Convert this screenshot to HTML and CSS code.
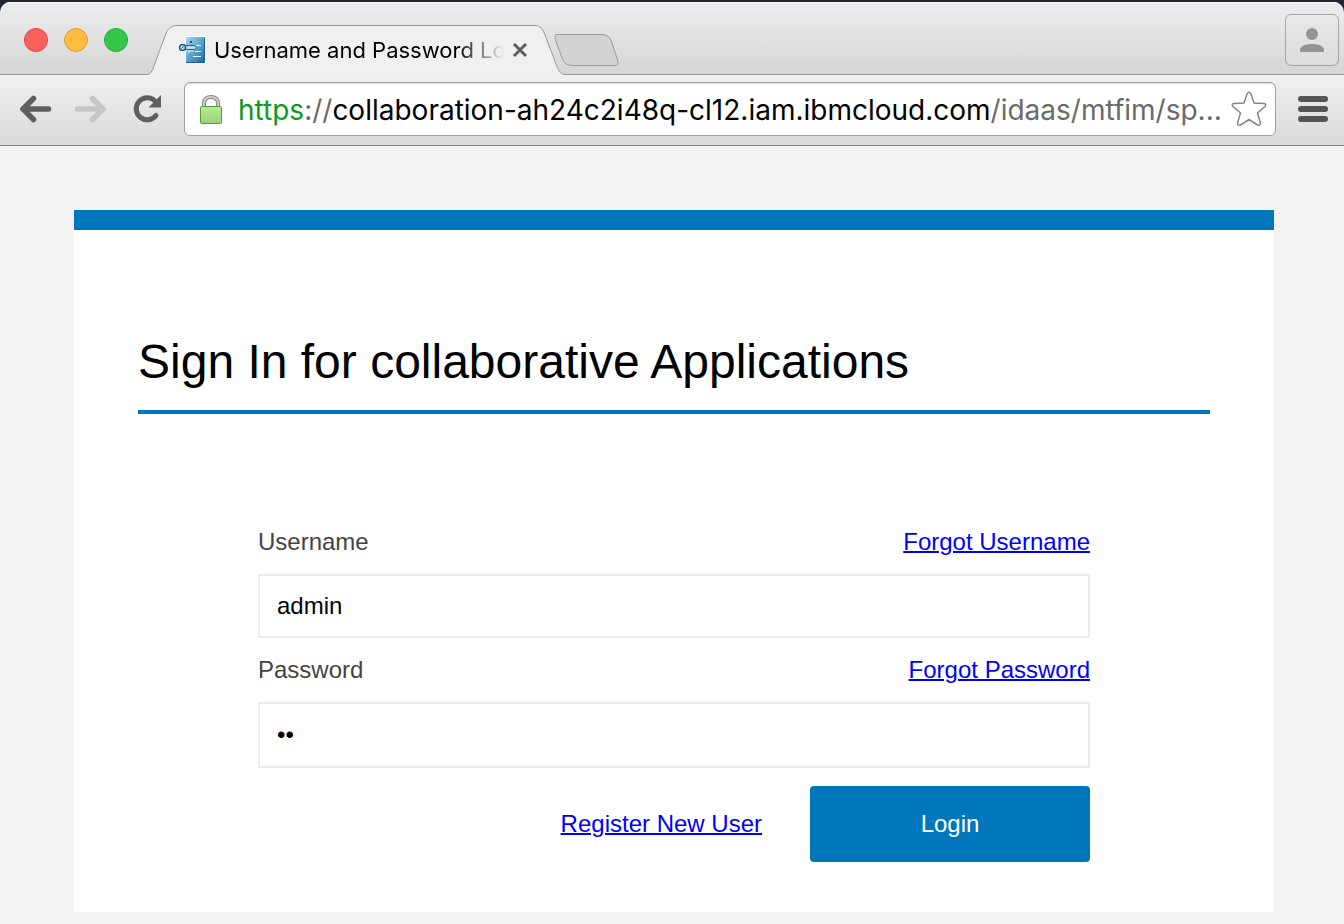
FILE: index.html
```html
<!DOCTYPE html>
<html lang="en">
<head>
<meta charset="utf-8">
<title>Username and Password Login</title>
<link rel="stylesheet" href="styles.css">
</head>
<body>
<div class="browser">
  <header class="chrome">
    <div class="tab-strip">
      <div class="window-controls">
        <button class="light light-close" aria-label="Close window"></button>
        <button class="light light-minimize" aria-label="Minimize window"></button>
        <button class="light light-zoom" aria-label="Zoom window"></button>
      </div>
      <div class="tab">
        <svg class="tab-edge" width="32" height="50" viewBox="0 0 32 50" aria-hidden="true">
          <path d="M0 50V49.5C5 49.5 6 46 8 41L19 11C21 5 24 .5 32 .5V50Z" fill="#f0f0f0"/>
          <path d="M0 49.5C5 49.5 6 46 8 41L19 11C21 5 24 .5 32 .5" fill="none" stroke="#989898"/>
        </svg>
        <div class="tab-body">
          <svg class="favicon" width="28" height="30" viewBox="0 0 28 30" aria-hidden="true">
            <defs>
              <linearGradient id="doc" x1="0" y1="0" x2="1" y2="1">
                <stop offset="0" stop-color="#a9d5e9"/><stop offset=".5" stop-color="#5ba3cb"/><stop offset="1" stop-color="#17659a"/>
              </linearGradient>
            </defs>
            <path d="M7 1H28V29H7V17H3L0 14V10L3 8H7Z" fill="#fff"/>
            <path d="M8 2H27V28H8Z" fill="url(#doc)"/>
            <path d="M8.500 27.500H26.500V3" fill="none" stroke="#1b618f"/>
            <path d="M12 7H14" stroke="#17547d" stroke-width="2"/>
            <path d="M18 10.500H23M17 16.500H23M15 21.500H23" stroke="#e7f5fb"/>
            <path d="M6 10.500H16L18.500 12.500L17 14.500H6Z" fill="#b9dcea" stroke="#1c6792"/>
            <path d="M9 15V17M11 15V18M13 15V17M15 15V17" stroke="#e9f7fb"/>
            <circle cx="4.500" cy="12.500" r="3" fill="#b7d9e8" stroke="#19628d" stroke-width="1.500"/>
            <path d="M3.500 13.500L5.500 11.500" stroke="#19628d"/>
          </svg>
          <span class="tab-title">Username and Password Lo</span>
          <button class="tab-close" aria-label="Close tab">
            <svg width="16" height="16" viewBox="0 0 16 16" aria-hidden="true"><path d="M2 2L14 14M14 2L2 14" stroke="#606060" stroke-width="3"/></svg>
          </button>
        </div>
        <svg class="tab-edge" width="32" height="50" viewBox="0 0 32 50" aria-hidden="true">
          <path d="M0 50V.5C7 .5 8.500 4 11 10L22 39C24 44 26 49.500 31 49.500H32V50Z" fill="#f0f0f0"/>
          <path d="M0 .5C7 .5 8.500 4 11 10L22 39C24 44 26 49.500 31 49.500H32" fill="none" stroke="#989898"/>
        </svg>
      </div>
      <button class="new-tab" aria-label="New tab">
        <svg width="66" height="34" viewBox="0 0 66 34" aria-hidden="true">
          <path d="M3 1.500H46C54 1.500 56 4 58 10L63.500 27C64.500 31 64 32.500 61 32.500H20C12 32.500 10 30 8 25L1.500 7C.5 3 .5 1.500 3 1.500Z" fill="#d3d3d3" stroke="#989898"/>
        </svg>
      </button>
      <button class="profile" aria-label="Profile">
        <svg width="24" height="26" viewBox="0 0 24 26" aria-hidden="true">
          <circle cx="12" cy="7" r="6" fill="#949494"/>
          <path d="M0 25V23C0 19 6 17 12 17S24 19 24 23V25Z" fill="#949494"/>
        </svg>
      </button>
    </div>
    <nav class="toolbar">
      <button class="tool back" aria-label="Back">
        <svg width="32" height="28" viewBox="0 0 32 28" aria-hidden="true"><path d="M13.500 3.500L3 14L13.500 24.500M3 14H28.500" fill="none" stroke="#5f5f5f" stroke-width="5.500" stroke-linecap="round" stroke-linejoin="round"/></svg>
      </button>
      <button class="tool forward" aria-label="Forward">
        <svg width="32" height="28" viewBox="0 0 32 28" aria-hidden="true"><path d="M18.500 3.500L29 14L18.500 24.500M29 14H3.500" fill="none" stroke="#c6c6c6" stroke-width="5.500" stroke-linecap="round" stroke-linejoin="round"/></svg>
      </button>
      <button class="tool reload" aria-label="Reload">
        <svg width="28" height="28" viewBox="0 0 28 28" aria-hidden="true">
          <path d="M22 6A11 11 0 1 0 23 20.500" fill="none" stroke="#5f5f5f" stroke-width="5" stroke-linecap="round"/>
          <path d="M28 0V12.500H15.500Z" fill="#5f5f5f"/>
        </svg>
      </button>
      <div class="address">
        <svg class="lock" width="24" height="32" viewBox="0 0 24 32" aria-hidden="true">
          <defs><linearGradient id="lock-body" x1="0" y1="0" x2="0" y2="1"><stop offset="0" stop-color="#b8ea96"/><stop offset="1" stop-color="#97d374"/></linearGradient></defs>
          <path d="M5 13V10.500C5 6 8 4 12 4S19 6 19 10.500V13" fill="none" stroke="#858585" stroke-width="4"/>
          <path d="M5 13V10.500C5 6 8 4 12 4S19 6 19 10.500V13" fill="none" stroke="#d0d0d0" stroke-width="2"/>
          <rect x="1.500" y="13.500" width="21" height="17" rx="1" fill="url(#lock-body)" stroke="#5b9a3d"/>
        </svg>
        <div class="url" role="textbox" aria-label="Address" tabindex="0"><span class="url-scheme">https</span>://<span class="url-host">collaboration-ah24c2i48q-cl12.iam.ibmcloud.com</span>/idaas/mtfim/sp...</div>
        <button class="star" aria-label="Bookmark this page">
          <svg width="36" height="36" viewBox="0 0 36 36" aria-hidden="true"><path d="M16 3Q18 -.5 20 3L23 12L33 12.500Q36 13 34 15.500L26.500 22L29.500 32Q29.500 35 26.500 34L18 28.500L9.500 34Q6.500 35 6.500 32L9.500 22L2 15.500Q0 13 3 12.500L13 12Z" fill="#fff" stroke="#858585" stroke-width="1.500"/></svg>
        </button>
      </div>
      <button class="tool menu" aria-label="Menu">
        <svg width="30" height="26" viewBox="0 0 30 26" aria-hidden="true"><path d="M3 3H27M3 13H27M3 23H27" stroke="#555" stroke-width="6" stroke-linecap="round"/></svg>
      </button>
    </nav>
  </header>
  <main class="page">
    <section class="card">
      <h1 class="card-title">Sign In for collaborative Applications</h1>
      <form class="login-form">
        <div class="field-head">
          <label for="username">Username</label>
          <a href="#">Forgot Username</a>
        </div>
        <input class="field" id="username" type="text" value="admin">
        <div class="field-head">
          <label for="password">Password</label>
          <a href="#">Forgot Password</a>
        </div>
        <input class="field field-password" id="password" type="password" value="ab">
        <div class="actions">
          <a href="#">Register New User</a>
          <button class="login-button" type="button">Login</button>
        </div>
      </form>
    </section>
  </main>
</div>
</body>
</html>
```

FILE: styles.css
```css
* {
  box-sizing: border-box;
}

body {
  margin: 0;
  background: #22252d;
  font-family: "Liberation Sans", Arial, sans-serif;
  font-size: 24px;
}

button {
  margin: 0;
  padding: 0;
  border: 0;
  background: none;
  font: inherit;
}

svg {
  display: block;
}

.browser {
  display: flex;
  flex-direction: column;
  min-height: 100vh;
  padding-top: 2px;
}

.chrome {
  overflow: hidden;
  border-radius: 10px 10px 0 0;
  border-bottom: 1px solid #868686;
}

.tab-strip {
  display: flex;
  align-items: flex-end;
  height: 73px;
  padding-right: 5px;
  background: linear-gradient(#ededed, #d5d5d5);
  box-shadow: inset 0 1px #fafafa, inset 0 -1px #989898;
}

.window-controls {
  display: flex;
  gap: 16px;
  padding: 0 18px 23px 24px;
}

.light {
  width: 24px;
  height: 24px;
  border: 1px solid;
  border-radius: 50%;
}

.light-close {
  background: #fc605c;
  border-color: #e0443f;
}

.light-minimize {
  background: #fdbc40;
  border-color: #dfa033;
}

.light-zoom {
  background: #34c84a;
  border-color: #24aa34;
}

.tab {
  display: flex;
  width: 420px;
  height: 50px;
}

.tab-edge {
  flex: none;
}

.tab-body {
  display: flex;
  flex: 1;
  align-items: center;
  min-width: 0;
  padding-bottom: 2px;
  border-top: 1px solid #989898;
  background: #f0f0f0;
}

.favicon {
  flex: none;
  margin-right: 8px;
}

.tab-title {
  flex: 1;
  min-width: 0;
  color: #000;
  font: 22px/28px Inter, "Noto Sans", sans-serif;
  white-space: nowrap;
  mask-image: linear-gradient(to right, #000 calc(100% - 48px), transparent);
}

.tab-close {
  margin: 0 6px 0 8px;
}

.new-tab {
  margin: 0 auto 8px -12px;
}

.profile {
  display: grid;
  place-items: center;
  width: 54px;
  height: 52px;
  margin-bottom: 9px;
  border: 1px solid #a5a5a5;
  border-radius: 6px;
  background: linear-gradient(#e9e9e9, #dbdbdb);
}

.toolbar {
  display: flex;
  align-items: center;
  height: 70px;
  padding: 0 16px 2px 20px;
  background: linear-gradient(#f0f0f0, #dadada);
}

.back {
  margin-right: 22px;
}

.forward {
  margin-right: 27px;
}

.reload {
  margin-right: 23px;
}

.address {
  display: flex;
  flex: 1;
  align-items: center;
  min-width: 0;
  height: 54px;
  margin-right: 22px;
  padding: 0 8px 0 14px;
  border: 1px solid #a0a0a0;
  border-radius: 6px;
  background: #fff;
  box-shadow: inset 0 1px 1px #ddd;
}

.lock {
  flex: none;
  margin-right: 15px;
}

.url {
  flex: 1;
  padding-top: 2px;
  color: #6a6a6a;
  font: 28px/40px Inter, "Noto Sans", sans-serif;
  white-space: nowrap;
}

.url-scheme {
  color: #0a9b1c;
}

.url-host {
  color: #000;
}

.page {
  flex: 1;
  padding: 64px 70px 12px 74px;
  background: #f3f3f3;
}

.card {
  padding: 98px 64px 50px;
  border-top: 20px solid #0077bc;
  background: #fff;
}

.card-title {
  margin: 0;
  padding-bottom: 14px;
  border-bottom: 4px solid #0077bc;
  color: #000;
  font-size: 48px;
  font-weight: 400;
  line-height: 68px;
}

.login-form {
  padding: 96px 120px 0;
}

.field-head {
  display: flex;
  align-items: center;
  justify-content: space-between;
  height: 64px;
  color: #444;
}

a {
  color: #0000ff;
  text-decoration-thickness: 2px;
}

.field {
  display: block;
  width: 100%;
  height: 64px;
  padding: 0 17px;
  border: 2px solid #ececec;
  background: #fff;
  color: #000;
  font: inherit;
}

.field-password {
  height: 66px;
}

.actions {
  display: flex;
  align-items: center;
  justify-content: flex-end;
  gap: 48px;
  margin-top: 18px;
}

.login-button {
  width: 280px;
  height: 76px;
  border-radius: 4px;
  background: #0077bc;
  color: #fff;
}
```
